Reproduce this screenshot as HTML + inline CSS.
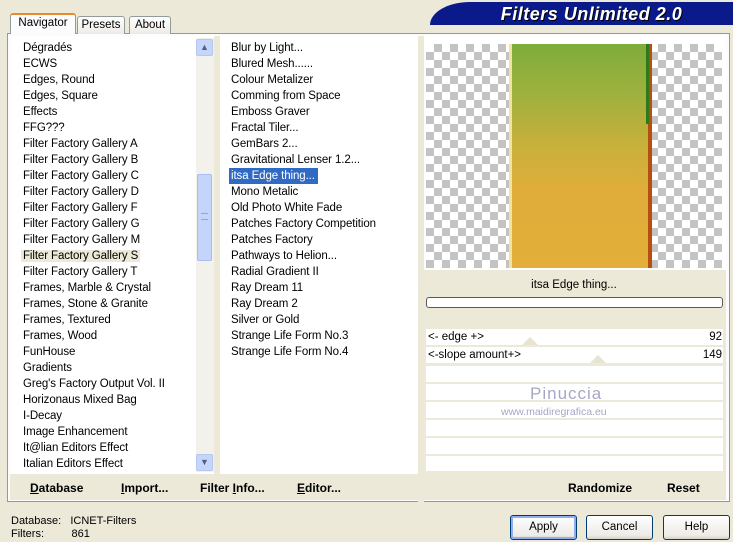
<!DOCTYPE html>
<html><head><style>
*{margin:0;padding:0;box-sizing:border-box}
body{width:733px;height:542px;background:#ece9d8;font-family:"Liberation Sans",sans-serif;font-size:11.5px;color:#000;position:relative;overflow:hidden}
.a{position:absolute}
.list div{height:16px;line-height:16px;padding-left:7px;white-space:nowrap;letter-spacing:-0.1px}
.tab{position:absolute;top:16px;height:18px;border:1px solid #919b9c;border-bottom:none;background:linear-gradient(#fff,#ecebe6);font-size:11.5px;text-align:center;line-height:16px;border-radius:3px 3px 0 0}
.chk{background-color:#fff;background-image:linear-gradient(45deg,#c3c3c3 25%,transparent 25%,transparent 75%,#c3c3c3 75%),linear-gradient(45deg,#c3c3c3 25%,transparent 25%,transparent 75%,#c3c3c3 75%);background-size:16px 16px;background-position:0 0,8px 8px}
.row{position:absolute;left:426px;width:297px;background:#fff}
.btn{position:absolute;top:515px;height:25px;border:1px solid #003c74;border-radius:3px;background:linear-gradient(#fff,#ecebe6 85%,#d6d0c5);text-align:center;line-height:23px;font-size:11.5px}
.bb{position:absolute;top:481px;font-weight:bold;font-size:12px}
</style></head><body>
<div class="a" style="left:430px;top:2px;width:303px;height:23px;background:#0b1a8a;border-top-left-radius:40px 23px"></div>
<div class="a" style="left:430px;top:2px;width:303px;height:23px;text-align:center;line-height:24px;color:#fff;font-weight:bold;font-style:italic;font-size:18px;padding-left:20px;text-shadow:1px 1px 0 #000;letter-spacing:0.5px">Filters Unlimited 2.0</div>
<div class="a" style="left:7px;top:33px;width:723px;height:469px;border:1px solid #919b9c;background:#fcfcfe"></div>
<div class="tab" style="left:10px;top:13px;width:66px;height:21px;background:#fcfcfe;border-top:2px solid #e68b2c;z-index:2;border-bottom:none">Navigator</div>
<div class="tab" style="left:77px;width:48px">Presets</div>
<div class="tab" style="left:129px;width:42px">About</div>
<div class="a" style="left:10px;top:36px;width:412px;height:438px;background:#fff"></div>
<div class="a" style="left:10px;top:474px;width:716px;height:26px;background:#ece9d8"></div>
<div class="a list" style="left:16px;top:40px;width:180px">
<div>Dégradés</div><div>ECWS</div><div>Edges, Round</div><div>Edges, Square</div><div>Effects</div><div>FFG???</div><div>Filter Factory Gallery A</div><div>Filter Factory Gallery B</div><div>Filter Factory Gallery C</div><div>Filter Factory Gallery D</div><div>Filter Factory Gallery F</div><div>Filter Factory Gallery G</div><div>Filter Factory Gallery M</div><div><span style="background:#ece9d8;margin-left:-2px;padding:0 2px">Filter Factory Gallery S</span></div><div>Filter Factory Gallery T</div><div>Frames, Marble &amp; Crystal</div><div>Frames, Stone &amp; Granite</div><div>Frames, Textured</div><div>Frames, Wood</div><div>FunHouse</div><div>Gradients</div><div>Greg's Factory Output Vol. II</div><div>Horizonaus Mixed Bag</div><div>I-Decay</div><div>Image Enhancement</div><div>It@lian Editors Effect</div><div>Italian Editors Effect</div>
</div>
<div class="a" style="left:196px;top:38px;width:18px;height:434px;background:#f3f1ec"></div>
<div class="a" style="left:196px;top:39px;width:17px;height:17px;border:1px solid #b3c7f3;border-radius:2px;background:#c6d6fb;text-align:center;font-size:9px;line-height:15px;color:#4d6185">▲</div>
<div class="a" style="left:196px;top:454px;width:17px;height:17px;border:1px solid #b3c7f3;border-radius:2px;background:#c6d6fb;text-align:center;font-size:9px;line-height:15px;color:#4d6185">▼</div>
<div class="a" style="left:197px;top:174px;width:15px;height:87px;border:1px solid #a9bdf2;border-radius:2px;background:#c4d4fb"></div>
<div class="a" style="left:201px;top:213px;width:7px;height:7px;border-top:1px solid #8ea6e0;border-bottom:1px solid #8ea6e0"></div>
<div class="a" style="left:214px;top:36px;width:6px;height:438px;background:#ece9d8"></div>
<div class="a list" style="left:224px;top:40px;width:194px">
<div>Blur by Light...</div><div>Blured Mesh......</div><div>Colour Metalizer</div><div>Comming from Space</div><div>Emboss Graver</div><div>Fractal Tiler...</div><div>GemBars 2...</div><div>Gravitational Lenser 1.2...</div><div><span style="background:#316ac5;color:#fff;margin-left:-2px;padding:0 3px 0 2px;display:inline-block">itsa Edge thing...</span></div><div>Mono Metalic</div><div>Old Photo White Fade</div><div>Patches Factory Competition</div><div>Patches Factory</div><div>Pathways to Helion...</div><div>Radial Gradient II</div><div>Ray Dream 11</div><div>Ray Dream 2</div><div>Silver or Gold</div><div>Strange Life Form No.3</div><div>Strange Life Form No.4</div>
</div>
<div class="a" style="left:418px;top:36px;width:6px;height:466px;background:#ece9d8"></div>
<div class="a" style="left:424px;top:36px;width:302px;height:438px;background:#fff"></div>
<div class="a chk" style="left:426px;top:44px;width:296px;height:224px"></div>
<div class="a" style="left:509px;top:44px;width:143px;height:224px;background:linear-gradient(#7fac3a,#9ab13e 20%,#c8b03c 45%,#e0ad3a 65%,#e3ae3a 100%);border-left:3px solid #f0e4a0;border-right:4px solid #b54f10"></div>
<div class="a" style="left:646px;top:44px;width:3px;height:80px;background:#2e7a18"></div>
<div class="a" style="left:424px;top:270px;width:302px;height:204px;background:#ece9d8"></div>
<div class="a" style="left:424px;top:279px;width:300px;text-align:center">itsa Edge thing...</div>
<div class="a" style="left:426px;top:297px;width:297px;height:11px;border:1px solid #5a5a5a;border-radius:3px;background:#fff"></div>
<div class="row" style="top:329px;height:16px"></div>
<div class="row" style="top:347px;height:16px"></div>
<div class="row" style="top:366px;height:16px"></div>
<div class="row" style="top:384px;height:16px"></div>
<div class="row" style="top:402px;height:16px"></div>
<div class="row" style="top:420px;height:16px"></div>
<div class="row" style="top:438px;height:16px"></div>
<div class="row" style="top:456px;height:15px"></div>
<div class="a" style="left:522px;top:337px;border:8px solid transparent;border-bottom-color:#e8e4d4;border-top:0"></div>
<div class="a" style="left:590px;top:355px;border:8px solid transparent;border-bottom-color:#e8e4d4;border-top:0"></div>
<div class="a" style="left:428px;top:331px">&lt;- edge +&gt;</div>
<div class="a" style="left:428px;top:349px">&lt;-slope amount+&gt;</div>
<div class="a" style="left:680px;top:331px;width:42px;text-align:right">92</div>
<div class="a" style="left:680px;top:349px;width:42px;text-align:right">149</div>
<div class="a" style="left:530px;top:384px;color:#a6a8c4;font-size:17px;letter-spacing:1px">Pinuccia</div>
<div class="a" style="left:501px;top:406px;color:#a6a8c4;font-size:10.5px">www.maidiregrafica.eu</div>
<div class="bb" style="left:30px"><u>D</u>atabase</div>
<div class="bb" style="left:121px"><u>I</u>mport...</div>
<div class="bb" style="left:200px">Filter <u>I</u>nfo...</div>
<div class="bb" style="left:297px"><u>E</u>ditor...</div>
<div class="bb" style="left:568px">Randomize</div>
<div class="bb" style="left:667px">Reset</div>
<div class="a" style="left:11px;top:515px;font-size:11px;line-height:13px">Database:&nbsp;&nbsp; ICNET-Filters<br>Filters:&nbsp;&nbsp;&nbsp;&nbsp;&nbsp;&nbsp;&nbsp;&nbsp; 861</div>
<div class="btn" style="left:510px;width:67px;box-shadow:inset 0 0 0 2px #8eaef0">Apply</div>
<div class="btn" style="left:586px;width:67px">Cancel</div>
<div class="btn" style="left:663px;width:67px">Help</div>
</body></html>
